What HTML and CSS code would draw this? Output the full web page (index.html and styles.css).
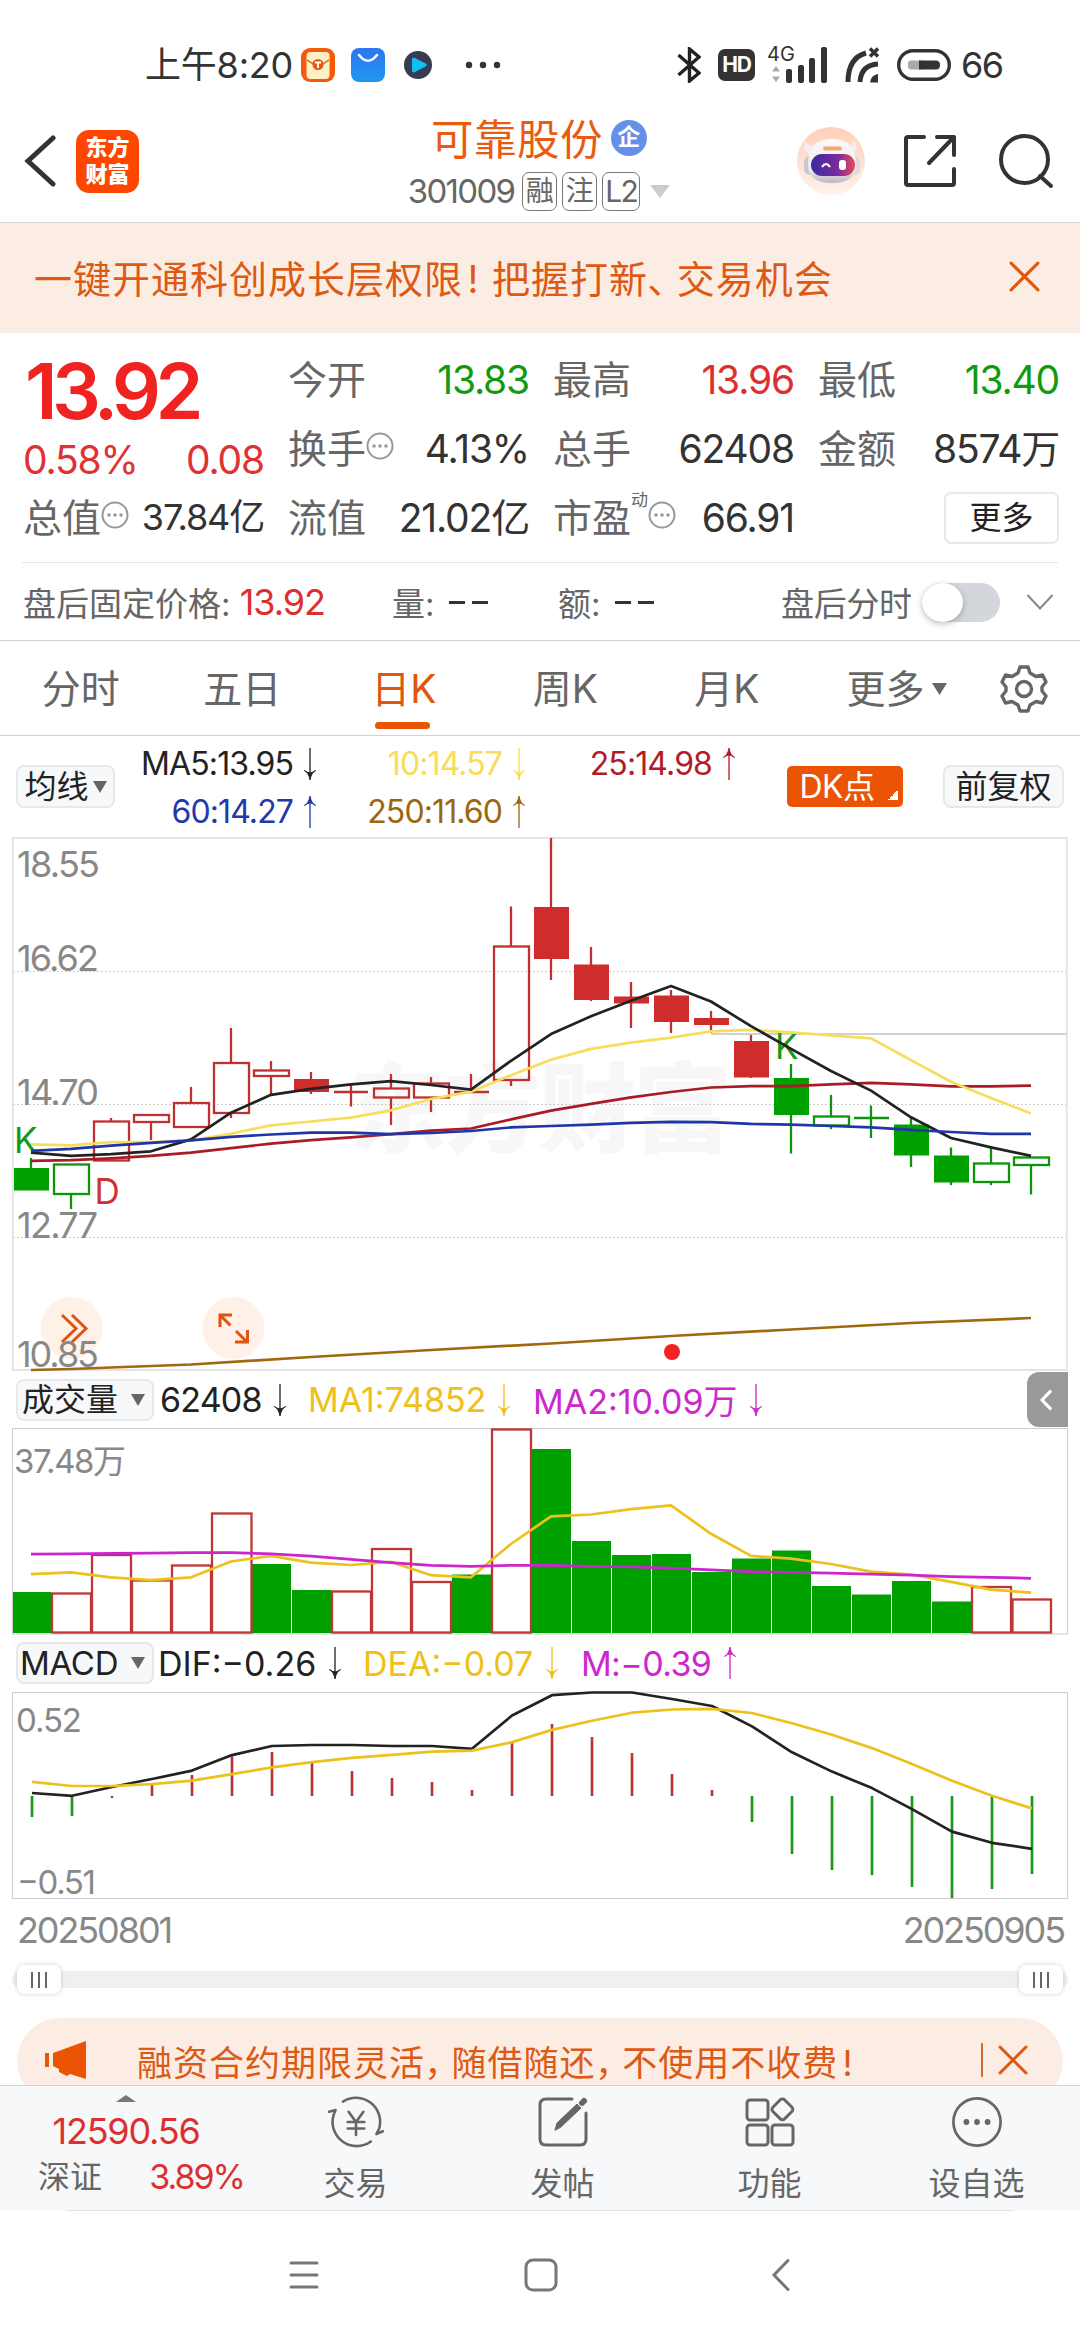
FILE: index.html
```html
<!DOCTYPE html>
<html lang="zh-CN">
<head>
<meta charset="utf-8">
<title>可靠股份 301009</title>
<link rel="stylesheet" href="styles.css">
</head>
<body>
<svg class="defs" width="0" height="0" aria-hidden="true">
  <symbol id="down" viewBox="0 0 14 34"><path d="M7 0V31" stroke="currentColor" stroke-width="1.4"/><path d="M1 24Q5.500 26 7 34Q8.500 26 13 24Q9 26.500 7 26.500Q5 26.500 1 24Z" fill="currentColor" stroke="currentColor"/></symbol>
  <symbol id="up" viewBox="0 0 14 34"><path d="M7 34V3" stroke="currentColor" stroke-width="1.400"/><path d="M1 10Q5.500 8 7 0Q8.500 8 13 10Q9 7.500 7 7.500Q5 7.500 1 10Z" fill="currentColor" stroke="currentColor"/></symbol>
  <symbol id="cross" viewBox="0 0 30 30"><path d="M2 2L28 28M28 2L2 28" stroke="#e0560f" stroke-width="3" stroke-linecap="round"/></symbol>
  <symbol id="info" viewBox="0 0 28 28"><circle cx="14" cy="14" r="12.500" fill="none" stroke="#999" stroke-width="2"/><g fill="#999"><circle cx="8" cy="14" r="1.800"/><circle cx="14" cy="14" r="1.800"/><circle cx="20" cy="14" r="1.800"/></g></symbol>
</svg>

<div class="status">
  <span class="time">上午8:20</span>
  <svg class="s1" width="34" height="34" viewBox="0 0 34 34"><rect width="34" height="34" rx="9" fill="#f4590c"/><rect x="5.500" y="4" width="23" height="27" rx="4" fill="#ffefc4"/><path d="M6 12L17 19L28 12" fill="none" stroke="#d87b2a" stroke-width="1.500"/><circle cx="17" cy="16.500" r="5.500" fill="#e05a18"/><path d="M14 14.500H20M17 14.500V20" stroke="#fff" stroke-width="1.800"/></svg>
  <svg class="s2" width="34" height="34" viewBox="0 0 34 34"><defs><linearGradient id="bag" x2="0" y2="1"><stop stop-color="#2f76f2"/><stop offset="1" stop-color="#1f98ee"/></linearGradient></defs><rect width="34" height="34" rx="8" fill="url(#bag)"/><path d="M8 7Q17 18.500 26 7" fill="none" stroke="#fff" stroke-width="2.500" stroke-linecap="round"/></svg>
  <svg class="s3" width="28" height="28" viewBox="0 0 28 28"><circle cx="14" cy="14" r="14" fill="#383c52"/><path d="M8 8.500Q8 5.500 11 7L21.500 12.500Q24 14 21.500 15.500L11 21Q8 22.500 8 19.500Z" fill="#0fc0f5"/></svg>
  <svg class="s4" width="36" height="8" viewBox="0 0 36 8" fill="#333"><circle cx="4" cy="4" r="3.200"/><circle cx="18" cy="4" r="3.200"/><circle cx="32" cy="4" r="3.200"/></svg>
  <svg class="s5" width="24" height="36" viewBox="0 0 24 36" fill="none" stroke="#222" stroke-width="3.400"><path d="M1.500 8L22 26L12.500 34V2L22 10L1.500 28"/></svg>
  <span class="hd">HD</span>
  <span class="net"><span class="g4">4G</span>
    <svg width="62" height="36" viewBox="0 0 62 36"><path d="M9 19l4 5.500H5ZM9 35l4-5.500H5Z" fill="#aaa"/><g fill="#333"><rect x="19" y="22" width="6" height="14" rx="2"/><rect x="31" y="18" width="6" height="18" rx="2"/><rect x="42" y="11" width="6" height="25" rx="2"/><rect x="54" y="0" width="6" height="36" rx="2"/></g></svg></span>
  <svg class="s6" width="34" height="36" viewBox="0 0 34 36"><g fill="none" stroke="#333" stroke-width="5"><path d="M3 35Q3 11 21 6"/><path d="M15 35Q16 18 33 17"/></g><path d="M25 35.500Q26 28 33 27V35.500Z" fill="#333"/><path d="M25 1.500L33 9.500M33 1.500L25 9.500" stroke="#333" stroke-width="3.500"/></svg>
  <svg class="s7" width="54" height="32" viewBox="0 0 54 32"><rect x="1.700" y="1.700" width="50.600" height="28.600" rx="14.300" fill="none" stroke="#333" stroke-width="3.400"/><rect x="11" y="11.500" width="16" height="9" rx="3" fill="#aaa"/><path d="M22 11.500H39Q43 11.500 43 16T39 20.500H22Z" fill="#333"/></svg>
  <span class="batt">66</span>
</div>

<header class="head">
  <div class="head-left">
    <svg width="32" height="52" viewBox="0 0 32 52"><path d="M29 3L4 26L29 49" fill="none" stroke="#333" stroke-width="5" stroke-linecap="round"/></svg>
    <div class="logo"><span>东方</span><span>财富</span></div>
  </div>
  <div class="head-mid">
    <div class="title"><span>可靠股份</span><i class="qi">企</i></div>
    <div class="code"><span class="num">301009</span><i>融</i><i>注</i><i class="l2">L2</i><svg width="20" height="13"><path d="M0 0H20L10 13Z" fill="#ccc"/></svg></div>
  </div>
  <div class="head-right">
    <svg width="68" height="68" viewBox="0 0 68 68"><defs><linearGradient id="rb" x2="0" y2="1"><stop stop-color="#ffcfb8"/><stop offset="1" stop-color="#fff3ec"/></linearGradient><linearGradient id="rv"><stop stop-color="#3a2b9c"/><stop offset=".6" stop-color="#7a2aa0"/><stop offset="1" stop-color="#e84a5a"/></linearGradient><linearGradient id="rh" x2="0" y2="1"><stop stop-color="#fbf9f9"/><stop offset=".7" stop-color="#eeebee"/><stop offset="1" stop-color="#bdb6c0"/></linearGradient></defs><circle cx="34" cy="34" r="34" fill="url(#rb)"/><path d="M8 14Q4 23 13 27L18 19Q10 19 8 14ZM57 13Q63 22 55 27L50 19Q56 18 57 13Z" fill="#f3eef0"/><rect x="7" y="29" width="12" height="19" rx="6" fill="#c9c4ce"/><rect x="50" y="29" width="13" height="19" rx="6" fill="#ded9de"/><path d="M11 38Q11 12 35 12Q59 12 59 38Q59 56 35 56Q11 56 11 38Z" fill="url(#rh)"/><rect x="26" y="19.500" width="19" height="4" rx="2" fill="#f0a970"/><rect x="14" y="27" width="44" height="22" rx="11" fill="url(#rv)"/><path d="M25 40Q29 34 33 40" fill="none" stroke="#fff" stroke-width="2.200"/><rect x="42" y="33" width="7" height="10" rx="3" fill="#fff"/></svg>
    <svg class="share" width="54" height="54" viewBox="0 0 54 54" fill="none" stroke="#333" stroke-width="4" stroke-linecap="round" stroke-linejoin="round"><path d="M21 3H5Q3 3 3 5V49Q3 51 5 51H49Q51 51 51 49V35M34 3H51V21M51 3L26 29"/></svg>
    <svg width="56" height="56" viewBox="0 0 56 56" fill="none" stroke="#333" stroke-width="4" stroke-linecap="round"><circle cx="26.500" cy="26.500" r="23.500"/><path d="M42 43L53 53"/></svg>
  </div>
</header>

<div class="banner"><span>一键开通科创成长层权限<i class="p">!</i>把握打新<i class="p c">、</i>交易机会</span><svg width="31" height="31"><use href="#cross"/></svg></div>

<section class="quote">
  <div class="big">
    <div class="price">13.92</div>
    <div class="chg"><span>0.58%</span><span>0.08</span></div>
  </div>
  <div class="cell"><label>今开</label><b class="g">13.83</b></div>
  <div class="cell"><label>最高</label><b class="r">13.96</b></div>
  <div class="cell"><label>最低</label><b class="g">13.40</b></div>
  <div class="cell"><label>换手<svg class="info"><use href="#info"/></svg></label><b>4.13%</b></div>
  <div class="cell"><label>总手</label><b>62408</b></div>
  <div class="cell"><label>金额</label><b>8574万</b></div>
  <div class="cell small"><label>总值<svg class="info"><use href="#info"/></svg></label><b>37.84亿</b></div>
  <div class="cell"><label>流值</label><b>21.02亿</b></div>
  <div class="cell"><label>市盈<sup>动</sup><svg class="info"><use href="#info"/></svg></label><b>66.91</b></div>
  <div class="cell end"><button class="more">更多</button></div>
</section>

<section class="after">
  <span>盘后固定价格: <b class="r">13.92</b></span>
  <span>量:<b class="dash"></b></span>
  <span>额:<b class="dash"></b></span>
  <span class="sw">盘后分时<i class="toggle"></i></span>
  <svg width="28" height="18" viewBox="0 0 28 18"><path d="M1.500 2L14 15.500L26.500 2" fill="none" stroke="#888" stroke-width="2"/></svg>
</section>

<nav class="tabs">
  <span>分时</span><span>五日</span><span class="on">日K</span><span>周K</span><span>月K</span>
  <span class="tm">更多<svg width="15" height="12"><path d="M0 0H15L7.500 12Z" fill="#666"/></svg></span>
  <svg class="gear" width="50" height="50" viewBox="0 0 50 50" fill="none" stroke="#666" stroke-width="3.400" stroke-linejoin="round"><path d="M21 3H29L31 9L37 12.500L43.500 11L47 18L43 23V27L47 32L43.500 39L37 37.500L31 41L29 47H21L19 41L13 37.500L6.500 39L3 32L7 27V23L3 18L6.500 11L13 12.500L19 9Z"/><circle cx="25" cy="25" r="7.500"/></svg>
</nav>

<section class="ma">
  <button class="pick">均线<svg width="14" height="12"><path d="M0 0H14L7 12Z" fill="#666"/></svg></button>
  <div class="mavals">
    <span class="k">MA5:13.95<svg><use href="#down"/></svg></span><span class="y">10:14.57<svg><use href="#down"/></svg></span><span class="d">25:14.98<svg><use href="#up"/></svg></span>
    <span class="b">60:14.27<svg><use href="#up"/></svg></span><span class="o">250:11.60<svg><use href="#up"/></svg></span>
  </div>
  <button class="dk">DK点</button>
  <button class="pick fq">前复权</button>
</section>

<div class="pane">
<svg class="chart" width="1080" height="535" viewBox="0 837 1080 535">
  <text x="349" y="1144" textLength="382" class="wm">东方财富</text>
  <g class="grid"><path d="M13 971.500H1067M13 1104.500H1067M13 1237.500H1067"/></g>
  <rect x="12.800" y="838" width="1054" height="532" class="frame"/>
  <path d="M711 1034H1067" stroke="#d0d2d0" stroke-width="2"/>
  <circle cx="71.500" cy="1328" r="31" fill="#fff0e8"/><circle cx="233.500" cy="1328" r="31" fill="#fff0e8"/>
  <g fill="none" stroke="#dd5511" stroke-width="3"><path d="M62 1315L76 1328.500L62 1342M72 1315L86 1328.500L72 1342M220 1327V1315H232M220 1315L230.500 1325.500M236 1331L247 1342M235 1342H247.500V1330"/></g>
  <g class="axis"><text x="17" y="876.500" textLength="83">18.55</text><text x="17" y="971" textLength="82">16.62</text><text x="17" y="1104.500" textLength="82">14.70</text><text x="17" y="1237.500" textLength="81">12.77</text><text x="17" y="1366.500" textLength="82">10.85</text></g>
  <g class="cr">
    <path class="w" d="M111 1118V1121M151 1123V1140M191 1087V1103M231 1028V1063M231 1113V1118M271 1061V1070M271 1076V1094M311 1072V1094M351 1084V1106.500M334 1092H368M391 1074V1088M391 1098V1125M431 1077V1083M431 1098V1112M471 1074V1093M454 1092H489M511 906.500V946M511 1080V1086M551 838V980M591 947V1001M631 982V1028M671 990V1033M711 1011V1033M751 1035V1078"/>
    <g class="h"><rect x="94" y="1121.500" width="35" height="39"/><rect x="134" y="1115" width="35" height="7"/><rect x="174" y="1103" width="35" height="24"/><rect x="214" y="1063" width="35" height="50"/><rect x="254" y="1070.500" width="35" height="5.500"/><rect x="374" y="1088.500" width="35" height="9"/><rect x="414" y="1083.500" width="35" height="14"/><rect x="494" y="946.500" width="35" height="133.500"/></g>
    <g class="f"><rect x="294" y="1079" width="35" height="13"/><rect x="534" y="907" width="35" height="52"/><rect x="574" y="964.500" width="35" height="35.500"/><rect x="614" y="996.500" width="35" height="7"/><rect x="654" y="995.500" width="35" height="26.500"/><rect x="694" y="1018" width="35" height="7"/><rect x="734" y="1041" width="35" height="36.500"/></g>
  </g>
  <g class="cg">
    <path class="w" d="M31 1158V1190M71 1194V1209M791 1064V1153.500M831 1095V1116M831 1126V1129M871 1105.500V1138M854 1118H889M911 1118V1167M951 1147.500V1185M991 1148V1163M991 1182V1185M1031 1165V1194.500"/>
    <g class="h"><rect x="54" y="1164.500" width="35" height="29.500"/><rect x="814" y="1116.500" width="35" height="9"/><rect x="974" y="1163.500" width="35" height="18.500"/><rect x="1014" y="1157.500" width="35" height="7.500"/></g>
    <g class="f"><rect x="14" y="1168" width="35" height="22.500"/><rect x="774" y="1078" width="35" height="37"/><rect x="894" y="1124.500" width="35" height="31"/><rect x="934" y="1155.500" width="35" height="27"/></g>
  </g>
  <g class="mark"><text x="14" y="1152.500" fill="#159a15">K</text><text x="775" y="1059" fill="#159a15">K</text><text x="94.500" y="1204" fill="#c33">D</text></g>
  <g class="line">
    <polyline stroke="#ab1a26" points="31,1160.800 71,1160.100 111,1158.300 151,1155.900 191,1152.700 231,1148.100 271,1143.600 311,1140.100 351,1137.300 391,1134.100 431,1130.600 471,1128.500 511,1119.400 551,1110.600 591,1103.900 631,1097.300 671,1092 711,1087.500 751,1086.100 791,1086.100 831,1084.300 871,1082.900 911,1084.300 951,1086.400 991,1086.400 1031,1085.700"/>
    <polyline stroke="#f6de5c" points="31,1144.300 71,1145.300 111,1142.200 151,1142.200 191,1140.400 231,1133.800 271,1125.300 311,1121.500 351,1117.600 391,1110.300 431,1099 471,1091.700 511,1075.200 551,1059.700 591,1048.900 631,1042.600 671,1037.600 711,1031.300 751,1029.900 791,1032.400 831,1035.500 871,1038.300 911,1060.100 951,1081.800 991,1098 1031,1113.400"/>
    <polyline stroke="#222" points="31,1152.700 71,1155.900 111,1154.100 151,1151.300 191,1139.400 231,1112.700 271,1094.800 311,1088.900 351,1084.300 391,1081.100 431,1085 471,1089.600 511,1060.800 551,1034.100 591,1016.300 631,1000.800 671,986.100 711,1001.500 751,1026.100 791,1048.900 831,1071 871,1090.600 911,1117.300 951,1138 991,1147.400 1031,1155.900"/>
    <polyline stroke="#2036a8" points="31,1150.900 71,1148.800 111,1145.700 151,1142.900 191,1140.400 231,1136.900 271,1134.500 311,1132.700 351,1132.700 391,1134.100 431,1133 471,1131 511,1127.400 551,1126 591,1124.600 631,1122.900 671,1121.800 711,1122.200 751,1123.900 791,1124.600 831,1126 871,1127.400 911,1129.900 951,1132 991,1133.800 1031,1133.800"/>
    <polyline stroke="#a0690f" points="31,1370 71,1369 191,1364.500 311,1357 431,1350 551,1343.500 671,1336 791,1329.500 911,1323 1031,1318"/>
  </g>
  <circle cx="672" cy="1352" r="8" fill="#f02222"/>
</svg>
</div>

<div class="ind">
  <button class="pick wide">成交量<svg width="14" height="12"><path d="M0 0H14L7 12Z" fill="#666"/></svg></button>
  <span class="k v1">62408<svg><use href="#down"/></svg></span><span class="au v2">MA1:74852<svg><use href="#down"/></svg></span><span class="m v3">MA2:10.09万<svg><use href="#down"/></svg></span>
  <span class="side"><svg width="18" height="28" viewBox="0 0 18 28"><path d="M14.500 3L4 14L14.500 25" fill="none" stroke="#fff" stroke-width="4" stroke-linecap="round"/></svg></span>
</div>

<svg class="chart" width="1080" height="208" viewBox="0 1427 1080 208">
  <rect x="12.500" y="1428.500" width="1055" height="205.500" class="frame2"/>
  <text x="14" y="1472.500" textLength="112" class="ax2">37.48万</text>
  <g class="vg"><rect x="13" y="1592" width="38.300" height="41"/><rect x="252" y="1564" width="39" height="69"/><rect x="292" y="1590" width="39" height="43"/><rect x="452" y="1574.500" width="39" height="58.500"/></g>
  <g class="vr"><rect x="52" y="1593.500" width="39" height="39"/><rect x="92" y="1555" width="39" height="77.500"/><rect x="132" y="1580.500" width="39" height="52"/><rect x="172" y="1565.500" width="39" height="67"/><rect x="212" y="1513.500" width="39.500" height="119"/><rect x="332" y="1591.500" width="39" height="41"/><rect x="372" y="1549" width="39" height="83.500"/><rect x="412" y="1582" width="39" height="50.500"/><rect x="492" y="1429.500" width="39" height="203"/><rect x="972" y="1587" width="39" height="45.500"/><rect x="1012.500" y="1599.500" width="38.500" height="33"/></g>
  <g class="vg"><rect x="532" y="1449" width="39" height="184"/><rect x="572" y="1541" width="39" height="92"/><rect x="612" y="1555" width="39" height="78"/><rect x="652" y="1554" width="39" height="79"/><rect x="692" y="1572" width="39" height="61"/><rect x="732" y="1558.500" width="39" height="74.500"/><rect x="772" y="1550.500" width="39" height="82.500"/><rect x="812" y="1586" width="39" height="47"/><rect x="852" y="1594.500" width="39" height="38.500"/><rect x="892" y="1581" width="39" height="52"/><rect x="932" y="1601.500" width="39" height="31.500"/></g>
  <g class="line">
    <polyline stroke="#ecc11c" points="31,1574.100 71,1572.400 111,1577.300 151,1580.100 191,1577.300 231,1561.500 271,1555.900 311,1562.600 351,1565 391,1561.900 431,1575.200 471,1577.300 511,1544 551,1516.300 591,1514.500 631,1509.200 671,1505.400 711,1533.800 751,1555.900 791,1558.700 831,1564 871,1571.700 911,1574.500 951,1581.900 991,1589.600 1031,1592.700"/>
    <polyline stroke="#cc25cc" points="31,1554.100 71,1553.800 111,1553.400 151,1553.100 191,1552.700 231,1552.700 271,1553.800 311,1556.200 351,1559.400 391,1562.600 431,1565.400 471,1566.400 511,1565.400 551,1565.400 591,1566.400 631,1566.800 671,1568.200 711,1569.900 751,1571.700 791,1572.400 831,1573.100 871,1574.100 911,1575.200 951,1576.600 991,1577.300 1031,1578.300"/>
  </g>
</svg>

<div class="ind macd">
  <button class="pick wide">MACD<svg width="14" height="12"><path d="M0 0H14L7 12Z" fill="#666"/></svg></button>
  <span class="k m1">DIF:−0.26<svg><use href="#down"/></svg></span><span class="au m2">DEA:−0.07<svg><use href="#down"/></svg></span><span class="m m3">M:−0.39<svg><use href="#up"/></svg></span>
</div>

<svg class="chart" width="1080" height="209" viewBox="0 1691 1080 209">
  <rect x="12.500" y="1692.500" width="1055" height="206" class="frame2"/>
  <g class="ax2"><text x="16" y="1731.500" textLength="66">0.52</text><text x="17" y="1893.500" textLength="79">−0.51</text></g>
  <path stroke="#b83232" stroke-width="2.600" d="M152 1796V1785M192 1796V1775M232 1796V1756.500M272 1796V1752M312 1796V1762M352 1796V1771M392 1796V1778M432 1796V1782M472 1796V1790M512 1796V1741M552 1796V1724M592 1796V1737M632 1796V1753M672 1796V1774M712 1796V1790"/>
  <path stroke="#159615" stroke-width="2.600" d="M32 1796V1817M72 1796V1816M112 1796V1798M752 1796V1822M792 1796V1854M832 1796V1870M872 1796V1875M912 1796V1887M952 1796V1898M992 1796V1889M1032 1796V1874"/>
  <g class="line">
    <polyline stroke="#222" points="32,1793 72,1795.800 112,1787 152,1779 192,1770.600 232,1755.100 272,1746 312,1745 352,1745 392,1746 432,1746 472,1748.800 512,1715.500 552,1695.200 592,1692.500 632,1692.500 672,1699 712,1706 752,1726.400 792,1752.300 832,1771.600 872,1788.100 912,1809.100 952,1831.600 992,1842.800 1032,1848.800"/>
    <polyline stroke="#ecc11c" points="32,1781.800 72,1786 112,1786 152,1784.200 192,1780.700 232,1774.100 272,1767.400 312,1762.100 352,1757.900 392,1754.800 432,1751.600 472,1750.600 512,1742.100 552,1729.900 592,1720.800 632,1712.700 672,1709.500 712,1708.800 752,1713 792,1723.200 832,1734.800 872,1748.100 912,1763.900 952,1780.700 992,1795.800 1032,1808.400"/>
  </g>
</svg>

<div class="dates"><span>20250801</span><span>20250905</span></div>
<div class="slider"><i><u></u><u></u><u></u></i><i><u></u><u></u><u></u></i></div>

<div class="promo-wrap"><div class="promo">
  <svg width="41" height="38" viewBox="0 0 41 38" fill="#ea5404"><path d="M0 12H4V26H0ZM8 12L41 0V38L25 33L22 35L14 31V28L8 25Z"/></svg>
  <span>融资合约期限灵活<i class="p c">，</i>随借随还<i class="p c">，</i>不使用不收费<i class="p">!</i></span>
  <svg class="px" width="30" height="30"><use href="#cross"/></svg>
</div></div>

<footer class="bottom">
  <div class="index"><svg width="20" height="7"><path d="M0 7L10 0L20 7Z" fill="#777"/></svg><div class="ix">12590.56</div><div class="iy"><span>深证</span><b>3.89%</b></div></div>
  <div class="item"><svg width="60" height="56" viewBox="0 0 60 56" fill="none" stroke="#666" stroke-width="2.800" stroke-linecap="round" stroke-linejoin="round"><path d="M16 6A26 26 0 0 1 55 35L52 41L59 38M46 49A26 26 0 0 1 6 20L8 15L1 17M22 17L30 28L38 17M30 28V42M21 28H39M21 35H39"/></svg><span>交易</span></div>
  <div class="item"><svg width="52" height="52" viewBox="0 0 52 52" fill="none" stroke="#666" stroke-width="3" stroke-linecap="round"><path d="M35 3H9Q3 3 3 9V43Q3 49 9 49H43Q49 49 49 43V17"/><path d="M18 34L20 27L40 8L44 12L24 31Z" fill="#666" stroke-width="1"/><path d="M45 7L47 5" stroke-width="6"/></svg><span>发帖</span></div>
  <div class="item"><svg width="50" height="50" viewBox="0 0 50 50" fill="none" stroke="#666" stroke-width="3" stroke-linejoin="round"><rect x="2" y="3" width="21" height="20" rx="3"/><rect x="2" y="28" width="21" height="20" rx="3"/><rect x="27" y="28" width="21" height="20" rx="3"/><rect x="29" y="4" width="16.500" height="16.500" rx="3" transform="rotate(45 37.200 12.500)"/></svg><span>功能</span></div>
  <div class="item"><svg width="54" height="54" viewBox="0 0 54 54" fill="none" stroke="#666" stroke-width="2.800"><circle cx="27" cy="27" r="24.500"/><g fill="#666" stroke="none"><circle cx="16" cy="27" r="3"/><circle cx="27" cy="27" r="3"/><circle cx="38" cy="27" r="3"/></g></svg><span>设自选</span></div>
</footer>
<div class="sys">
  <svg width="30" height="30" viewBox="0 0 30 30" stroke="#777" stroke-width="3" stroke-linecap="round"><path d="M2 3H28M2 15H28M2 27H28"/></svg>
  <svg class="home" width="34" height="34" viewBox="0 0 34 34"><rect x="2" y="2" width="30" height="30" rx="7" fill="none" stroke="#777" stroke-width="3"/></svg>
  <svg width="20" height="34" viewBox="0 0 20 34"><path d="M17 2.500L3 17L17 31.500" fill="none" stroke="#777" stroke-width="3" stroke-linecap="round"/></svg>
</div>
</body>
</html>
```
FILE: styles.css
```css
* { box-sizing: border-box; }
body { margin: 0; width: 1080px; height: 2340px; overflow: hidden; background: #fff; color: #333; font-family: Inter, "Noto Sans CJK SC", sans-serif; font-size: 39px; letter-spacing: -.03em; }
i, b { font-style: normal; font-weight: 400; }
svg { display: block; flex: none; }
.defs { position: absolute; }
button { font: inherit; letter-spacing: inherit; color: #222; padding: 0; border: 2px solid #e6e8ea; }

.status { display: flex; align-items: center; height: 100px; padding: 30px 0 0 145px; line-height: 70px; }
.time { width: 156px; font-size: 36px; letter-spacing: -.2px; white-space: nowrap; }
.s2 { margin-left: 16px; }
.s3 { margin-left: 19px; }
.s4 { margin-left: 33px; }
.s5 { margin-left: 176px; }
.hd { margin-left: 17px; width: 37px; height: 32px; border-radius: 7px; background: #333; color: #fff; font-size: 21px; font-weight: 700; line-height: 32px; text-align: center; }
.net { position: relative; margin-left: 12px; }
.g4 { position: absolute; left: 0; top: 0; font-size: 20px; line-height: 14px; letter-spacing: 0; }
.s6 { margin-left: 16px; }
.s7 { margin-left: 18px; }
.batt { margin-left: 10px; font-size: 36px; letter-spacing: -1.500px; }

.head { display: grid; grid-template-columns: 1fr auto 1fr; align-items: center; height: 123px; border-bottom: 1px solid #d5d5d5; padding: 0 26px 0 24px; }
.head-left, .head-right { display: flex; align-items: center; }
.head-right { justify-content: flex-end; gap: 38px; }
.head-right .share { margin-right: 3px; }
.head-mid { padding-top: 2px; }
.logo { display: flex; flex-direction: column; justify-content: center; width: 63px; height: 63px; margin-left: 20px; border-radius: 13px; background: #ff4600; color: #fff; text-align: center; font-size: 22px; font-weight: 900; line-height: 27px; letter-spacing: 0; }
.title { display: flex; justify-content: center; gap: 8px; font-size: 42.500px; letter-spacing: .5px; line-height: 58px; color: #ea5a10; }
.qi { align-self: center; width: 36px; height: 36px; margin-top: -4px; border-radius: 50%; background: #6590ea; color: #fff; font-size: 23px; font-weight: 700; line-height: 35px; text-align: center; }
.code { display: flex; align-items: center; gap: 5px; height: 44px; color: #666; font-size: 33px; }
.code .num { letter-spacing: -1.700px; margin-right: 3px; }
.code i { width: 35px; height: 39px; border: 1px solid #777; border-radius: 7px; font-size: 28px; line-height: 36px; text-align: center; letter-spacing: 0; }
.code .l2 { width: 38px; font-size: 30px; letter-spacing: -1.500px; }
.code svg { margin-left: 5px; }

.banner { display: flex; align-items: center; justify-content: space-between; height: 110px; padding: 0 40px 3px 34px; background: #fcede4; color: #dd5a14; font-size: 38px; letter-spacing: 1px; }
.p { display: inline-block; width: .76em; text-align: left; text-indent: .12em; }
.p.c { text-indent: -.02em; letter-spacing: -.24em; }

.quote { display: grid; grid-template-columns: repeat(4, 241px); grid-auto-rows: 69px; column-gap: 24px; height: 230px; padding: 12px 0 0 1px; border-bottom: 1px solid #e6e6e6; margin: 0 22px; }
.big { grid-row: span 2; color: #e03232; }
.price { height: 84px; padding-left: 2px; line-height: 92px; font-size: 77px; font-weight: 600; letter-spacing: -5.600px; color: #f02222; }
.chg { display: flex; justify-content: space-between; line-height: 62px; }
.cell { display: flex; align-items: center; justify-content: space-between; line-height: 69px; white-space: nowrap; }
.cell label { display: flex; align-items: center; color: #666; letter-spacing: 0; }
.info { width: 28px; height: 28px; margin-top: -6px; }
.small b { font-size: 36px; }
.cell sup { font-size: 17px; line-height: 20px; align-self: flex-start; margin-top: 7px; }
.end { justify-content: flex-end; }
.more { width: 115px; height: 52px; border-radius: 7px; background: #fff; font-size: 32px; letter-spacing: 0; line-height: 48px; }
.r { color: #dc3030; }
.g { color: #0f9a0f; }

.after { display: grid; grid-template-columns: 369px 166px 223px 245px auto; align-items: center; height: 78px; padding: 1px 0 0 23px; border-bottom: 1px solid #d2d2d2; color: #666; font-size: 33px; letter-spacing: 0; }
.after .r { font-size: 36px; letter-spacing: -1.100px; }
.after span { display: flex; align-items: center; white-space: pre; }
.dash { width: 39px; height: 3px; margin-left: 14px; background: linear-gradient(90deg, #333 16px, transparent 16px 23px, #333 23px); }
.sw { letter-spacing: -.3px; }
.toggle { width: 78px; height: 39px; margin-left: 10px; border-radius: 20px; background: #d3d6db; }
.toggle::before { content: ""; display: block; width: 41px; height: 39px; border-radius: 50%; background: #fff; box-shadow: 0 2px 6px rgba(0,0,0,.25); }

.tabs { display: flex; align-items: center; height: 95px; padding: 2px 31px 0 0; border-bottom: 1px solid #d2d2d2; color: #666; letter-spacing: 0; }
.tabs > span { width: 161.500px; text-align: center; line-height: 88px; }
.tabs .on { color: #e0560f; position: relative; }
.on::after { content: ""; position: absolute; left: 52px; bottom: 4px; width: 55px; height: 7px; border-radius: 4px; background: #ea5404; }
.tabs .tm { display: flex; align-items: center; justify-content: center; gap: 7px; width: 178px; }
.gear { margin-left: auto; }

.ma { display: flex; align-items: center; height: 101px; padding: 0 16px; }
.pick { display: flex; align-items: center; justify-content: center; gap: 4px; width: 99px; height: 43px; border-radius: 8px; background: #f7f8fa; font-size: 32px; line-height: 38px; letter-spacing: 0; white-space: nowrap; }
.mavals { display: grid; grid-template-columns: 202px 209px 210px; font-size: 32px; letter-spacing: -.9px; padding-top: 3px; }
.mavals span { display: flex; justify-content: flex-end; align-items: center; gap: 10px; line-height: 48px; }
.mavals svg, .ind span > svg { width: 14px; height: 32px; }
.k { color: #222; } .y { color: #f9dc57; } .d { color: #b01c28; } .b { color: #2239a8; } .o { color: #9c660f; } .au { color: #eec11a; } .m { color: #cc28cc; }
.dk { width: 116px; height: 41px; margin-left: 51px; border: 0; border-radius: 5px; color: #fff; font-size: 32px; line-height: 41px; letter-spacing: -.5px; padding-right: 16px; background: linear-gradient(135deg, transparent 50%, #fff 50%) right 5px bottom 7px / 10px 10px no-repeat #ea5404; }
.fq { width: 121px; margin-left: auto; }

.pane, .chart { display: block; overflow: visible; }
.frame { fill: none; stroke: #e4e4e4; stroke-width: 2; }
.frame2 { fill: none; stroke: #ccc; stroke-width: 1; }
.grid { stroke: #ccc; stroke-width: 1; stroke-dasharray: 2 2; }
.wm { font-size: 97px; font-weight: 900; fill: #f7f7f7; letter-spacing: 0; }
.axis { font-size: 36px; fill: #888; letter-spacing: 0; }
.ax2 { font-size: 33px; fill: #888; letter-spacing: 0; }
.mark { font-size: 35px; }
.w, .h { fill: none; stroke-width: 2.300; }
.cr .w, .cr .h { stroke: #bf3030; } .cr .f { fill: #cf2c2c; }
.cg .w, .cg .h { stroke: #0c950c; } .cg .f { fill: #00a000; }
.vg { fill: #00a000; } .vr { fill: none; stroke: #c03535; stroke-width: 2.300; }
.line { fill: none; stroke-width: 2.700; stroke-linejoin: round; }

.ind { display: flex; align-items: center; height: 55px; padding-left: 16px; font-size: 34px; letter-spacing: 0; }
.ind.macd { height: 56px; }
.ind > span { display: flex; align-items: center; justify-content: space-between; white-space: nowrap; }
.wide { width: 138px; gap: 0; justify-content: space-between; padding: 0 7px 0 4px; height: 42px; }
.macd .wide { padding-left: 2px; font-size: 33px; letter-spacing: -.3px; }
.v1 { margin-left: 6px; width: 127px; letter-spacing: -.8px; } .v2 { margin-left: 21px; width: 203px; } .v3 { margin-left: 22px; width: 230px; }
.m1 { margin-left: 4px; width: 184px; } .m2 { margin-left: 21px; width: 196px; } .m3 { margin-left: 22px; width: 156px; letter-spacing: -.6px; }
.ind .side { width: 41px; height: 55px; margin: 0 12px 0 auto; padding-left: 12px; border-radius: 12px 0 0 12px; background: #999; }

.dates { display: flex; justify-content: space-between; height: 65px; padding: 0 16px 0 17px; line-height: 60px; font-size: 36px; letter-spacing: -2.100px; color: #888; }
.slider { display: flex; justify-content: space-between; align-items: center; height: 17px; margin: 6px 12px 0; padding: 0 5px; border-radius: 9px; background: #f0f0f3; }
.slider i { display: flex; justify-content: center; align-items: center; gap: 5px; width: 44px; height: 29px; border-radius: 8px; background: #fff; box-shadow: 0 0 5px rgba(0,0,0,.18); }
.slider u { width: 2px; height: 16px; background: #666; }
.promo-wrap { height: 67px; margin-top: 30px; padding: 0 17px; overflow: hidden; }
.promo { display: flex; align-items: center; height: 86px; border-radius: 43px; background: #fcede4; color: #dd5a14; padding: 0 35px 2px 28px; font-size: 35px; letter-spacing: 1px; }
.promo span { flex: 1; margin-left: 51px; }
.promo::after { content: ""; order: 3; width: 2px; height: 34px; background: #cf6d35; }
.px { order: 4; margin-left: 15px; }

.bottom { display: grid; grid-template-columns: 252px repeat(4, 207px); height: 126px; border-top: 1px solid #d2d2d2; background: linear-gradient(#e2e2e2, #e2e2e2) 66px 100% / 948px 1px no-repeat #f7f8fa; font-size: 32px; letter-spacing: 0; }
.index { display: flex; flex-direction: column; align-items: center; padding-top: 9px; color: #dc3030; }
.ix { font-size: 36px; letter-spacing: -1.200px; line-height: 56px; margin-top: 1px; }
.iy { display: flex; align-self: stretch; justify-content: space-between; padding: 0 8px 0 38px; line-height: 36px; }
.iy span { color: #666; }
.iy b { font-size: 34px; letter-spacing: -2px; }
.item { display: flex; flex-direction: column; align-items: center; color: #666; }
.item svg { height: 52px; margin-top: 10px; }
.item span { line-height: 40px; margin-top: 16px; }
.sys { display: flex; align-items: center; justify-content: space-between; height: 128px; padding: 0 289px; }
.home { margin-right: 9px; }
```
